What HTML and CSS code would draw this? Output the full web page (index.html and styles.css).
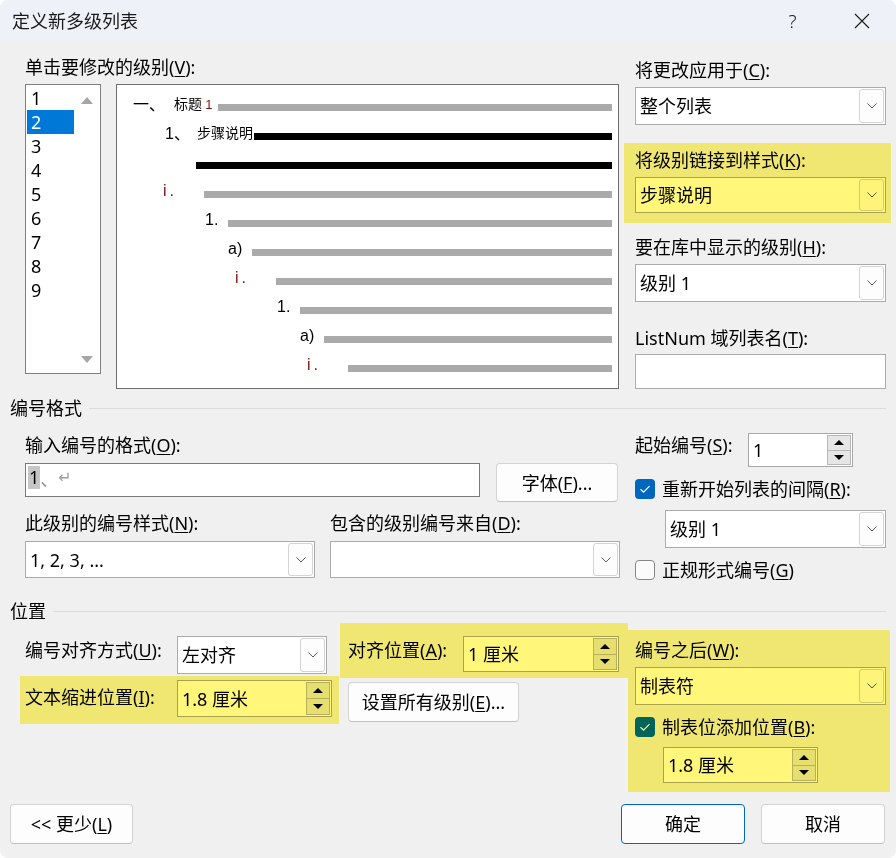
FILE: index.html
```html
<!DOCTYPE html>
<html lang="zh-CN">
<head>
<meta charset="utf-8">
<title>定义新多级列表</title>
<link rel="stylesheet" href="styles.css">
</head>
<body>
<div class="dlg">
  <div class="titlebar">
    <div class="title">定义新多级列表</div>
    <div class="tb-btn help">?</div>
    <div class="tb-btn close"><svg width="16" height="16" viewBox="0 0 16 16"><path d="M1 1 L15 15 M15 1 L1 15" stroke="#1a1a1a" stroke-width="1.1" fill="none"/></svg></div>
  </div>

  <div class="top">
    <div class="top-left">
      <div class="lbl">单击要修改的级别(<u>V</u>):</div>
      <div class="lvl-row">
        <div class="levels">
          <div class="items">
            <div class="item">1</div>
            <div class="item sel">2</div>
            <div class="item">3</div>
            <div class="item">4</div>
            <div class="item">5</div>
            <div class="item">6</div>
            <div class="item">7</div>
            <div class="item">8</div>
            <div class="item">9</div>
          </div>
          <div class="vscroll">
            <svg width="12" height="7" viewBox="0 0 12 7"><path d="M0 7 L6 0 L12 7 Z" fill="#a6a6a6"/></svg>
            <svg width="12" height="7" viewBox="0 0 12 7"><path d="M0 0 L6 7 L12 0 Z" fill="#a6a6a6"/></svg>
          </div>
        </div>
        <div class="preview">
          <div class="pv-row r1"><span class="pn cjk w41">一、</span><span class="pt w44">标题 <span class="red">1</span></span><span class="pv-bar"></span></div>
          <div class="pv-row r2"><span class="pn w32">1<span class="cjkc">、</span></span><span class="pt w57">步骤说明</span><span class="pv-bar blk"></span></div>
          <div class="pv-row r3"><span class="pv-bar blk"></span></div>
          <div class="pv-row r4"><span class="pn red ii w41">i.</span><span class="pv-bar"></span></div>
          <div class="pv-row r5"><span class="pn w23">1.</span><span class="pv-bar"></span></div>
          <div class="pv-row r6"><span class="pn w24">a)</span><span class="pv-bar"></span></div>
          <div class="pv-row r7"><span class="pn red ii w41">i.</span><span class="pv-bar"></span></div>
          <div class="pv-row r8"><span class="pn w23">1.</span><span class="pv-bar"></span></div>
          <div class="pv-row r9"><span class="pn w24">a)</span><span class="pv-bar"></span></div>
          <div class="pv-row r10"><span class="pn red ii w41">i.</span><span class="pv-bar"></span></div>
        </div>
      </div>
    </div>

    <div class="top-right">
      <div class="lbl">将更改应用于(<u>C</u>):</div>
      <div class="combo h38 mt5"><span class="cv">整个列表</span><span class="dd"><svg width="10" height="6" viewBox="0 0 10 6"><path d="M0.5 0.5 L5 5 L9.5 0.5" stroke="#5c5c5c" fill="none"/></svg></span></div>
      <div class="hl hl-link">
        <div class="lbl">将级别链接到样式(<u>K</u>):</div>
        <div class="combo h36 mt5"><span class="cv">步骤说明</span><span class="dd"><svg width="10" height="6" viewBox="0 0 10 6"><path d="M0.5 0.5 L5 5 L9.5 0.5" stroke="#5c5c5c" fill="none"/></svg></span></div>
      </div>
      <div class="lbl mt12">要在库中显示的级别(<u>H</u>):</div>
      <div class="combo h38 mt5"><span class="cv">级别 1</span><span class="dd"><svg width="10" height="6" viewBox="0 0 10 6"><path d="M0.5 0.5 L5 5 L9.5 0.5" stroke="#5c5c5c" fill="none"/></svg></span></div>
      <div class="lbl mt24">ListNum 域列表名(<u>T</u>):</div>
      <div class="field h35 mt4"></div>
    </div>
  </div>

  <div class="sec s-fmt">编号格式</div>

  <div class="fmt">
    <div class="fmt-left">
      <div class="lbl">输入编号的格式(<u>O</u>):</div>
      <div class="fmt-r1">
        <div class="edit"><span class="selnum">1</span><span class="g1">、</span><span class="g2">↵</span></div>
        <div class="btn b-font">字体(<u>F</u>)...</div>
      </div>
      <div class="grid2 mt9">
        <div class="lbl">此级别的编号样式(<u>N</u>):</div>
        <div class="lbl">包含的级别编号来自(<u>D</u>):</div>
      </div>
      <div class="grid2 mt6">
        <div class="combo h37"><span class="cv">1, 2, 3, ...</span><span class="dd"><svg width="10" height="6" viewBox="0 0 10 6"><path d="M0.5 0.5 L5 5 L9.5 0.5" stroke="#5c5c5c" fill="none"/></svg></span></div>
        <div class="combo h37"><span class="cv"></span><span class="dd"><svg width="10" height="6" viewBox="0 0 10 6"><path d="M0.5 0.5 L5 5 L9.5 0.5" stroke="#5c5c5c" fill="none"/></svg></span></div>
      </div>
    </div>
    <div class="fmt-right">
      <div class="row-start">
        <div class="lbl w113">起始编号(<u>S</u>):</div>
        <div class="spin w105 h34"><span class="sv">1</span><div class="sbtns"><div class="sbtn"><svg width="10" height="5" viewBox="0 0 10 5"><path d="M0 5 L5 0 L10 5 Z" fill="#000"/></svg></div><div class="sbtn"><svg width="10" height="5" viewBox="0 0 10 5"><path d="M0 0 L5 5 L10 0 Z" fill="#000"/></svg></div></div></div>
      </div>
      <div class="cbrow mt12"><span class="cb on"><svg width="20" height="20" viewBox="0 0 20 20"><path d="M5.5 10.2 L8.6 13.2 L14.5 7.2" stroke="#fff" stroke-width="1.2" fill="none"/></svg></span><span class="cbl">重新开始列表的间隔(<u>R</u>):</span></div>
      <div class="combo h38 mt11 c-restart"><span class="cv">级别 1</span><span class="dd"><svg width="10" height="6" viewBox="0 0 10 6"><path d="M0.5 0.5 L5 5 L9.5 0.5" stroke="#5c5c5c" fill="none"/></svg></span></div>
      <div class="cbrow mt12"><span class="cb off"></span><span class="cbl">正规形式编号(<u>G</u>)</span></div>
    </div>
  </div>

  <div class="sec s-pos">位置</div>

  <div class="pos">
    <div class="pos-a">
      <div class="pa-r1">
        <div class="lbl w152 mt2">编号对齐方式(<u>U</u>):</div>
        <div class="combo h38 w150"><span class="cv">左对齐</span><span class="dd"><svg width="10" height="6" viewBox="0 0 10 6"><path d="M0.5 0.5 L5 5 L9.5 0.5" stroke="#5c5c5c" fill="none"/></svg></span></div>
      </div>
      <div class="hl hl-indent">
        <div class="lbl w152 mt5">文本缩进位置(<u>I</u>):</div>
        <div class="spin w155 h37"><span class="sv">1.8 厘米</span><div class="sbtns"><div class="sbtn"><svg width="10" height="5" viewBox="0 0 10 5"><path d="M0 5 L5 0 L10 5 Z" fill="#000"/></svg></div><div class="sbtn"><svg width="10" height="5" viewBox="0 0 10 5"><path d="M0 0 L5 5 L10 0 Z" fill="#000"/></svg></div></div></div>
      </div>
    </div>
    <div class="pos-b">
      <div class="hl hl-align">
        <div class="lbl w115 mt2">对齐位置(<u>A</u>):</div>
        <div class="spin w156 h36"><span class="sv">1 厘米</span><div class="sbtns"><div class="sbtn"><svg width="10" height="5" viewBox="0 0 10 5"><path d="M0 5 L5 0 L10 5 Z" fill="#000"/></svg></div><div class="sbtn"><svg width="10" height="5" viewBox="0 0 10 5"><path d="M0 0 L5 5 L10 0 Z" fill="#000"/></svg></div></div></div>
      </div>
      <div class="btn b-all">设置所有级别(<u>E</u>)...</div>
    </div>
    <div class="pos-c">
      <div class="hl hl-after">
        <div class="lbl">编号之后(<u>W</u>):</div>
        <div class="combo h38 mt5"><span class="cv">制表符</span><span class="dd"><svg width="10" height="6" viewBox="0 0 10 6"><path d="M0.5 0.5 L5 5 L9.5 0.5" stroke="#5c5c5c" fill="none"/></svg></span></div>
        <div class="cbrow mt12"><span class="cb on"><svg width="20" height="20" viewBox="0 0 20 20"><path d="M5.5 10.2 L8.6 13.2 L14.5 7.2" stroke="#fff" stroke-width="1.2" fill="none"/></svg></span><span class="cbl">制表位添加位置(<u>B</u>):</span></div>
        <div class="spin w155 h36 mt10 ml28"><span class="sv">1.8 厘米</span><div class="sbtns"><div class="sbtn"><svg width="10" height="5" viewBox="0 0 10 5"><path d="M0 5 L5 0 L10 5 Z" fill="#000"/></svg></div><div class="sbtn"><svg width="10" height="5" viewBox="0 0 10 5"><path d="M0 0 L5 5 L10 0 Z" fill="#000"/></svg></div></div></div>
      </div>
    </div>
  </div>

  <div class="footer">
    <div class="btn b-less">&lt;&lt; 更少(<u>L</u>)</div>
    <div class="btn b-ok">确定</div>
    <div class="btn b-cancel">取消</div>
  </div>
</div>
</body>
</html>
```

FILE: styles.css
```css
* { box-sizing: border-box; margin: 0; padding: 0; }
html, body { background: #ffffff; }
body {
  font-family: "Noto Sans", "Noto Sans CJK SC", sans-serif;
  font-size: 18px;
  line-height: 24px;
  color: #000;
}
u { text-decoration: underline; text-decoration-thickness: 1px; text-underline-offset: 2px; }

.dlg {
  width: 896px; height: 858px;
  background: #f0f0f0;
  border-radius: 8px;
  overflow: hidden;
  display: flex; flex-direction: column;
}

/* title bar */
.titlebar { height: 41px; flex: none; background: #eef2f8; display: flex; align-items: center; }
.title { flex: 1; padding-left: 12px; color: #1a1a1a; }
.tb-btn { width: 69px; height: 41px; display: flex; align-items: center; justify-content: center; }
.help { font-size: 19px; font-weight: 300; color: #1a1a1a; }

/* helpers */
.lbl { line-height: 24px; white-space: nowrap; flex: none; }
.mt2 { margin-top: 2px; }
.mt4 { margin-top: 4px; }
.mt5 { margin-top: 5px; }
.mt6 { margin-top: 6px; }
.mt9 { margin-top: 9px; }
.mt10 { margin-top: 10px; }
.mt11 { margin-top: 11px; }
.mt12 { margin-top: 12px; }
.mt24 { margin-top: 24px; }
.ml28 { margin-left: 28px; }
.h34 { height: 34px; }
.h35 { height: 35px; }
.h36 { height: 36px; }
.h37 { height: 37px; }
.h38 { height: 38px; }
.w105 { width: 105px; }
.w113 { width: 113px; }
.w115 { width: 115px; }
.w150 { width: 150px; }
.w152 { width: 152px; }
.w155 { width: 155px; }
.w156 { width: 156px; }

/* top area */
.top { display: flex; flex: none; }
.top-left { margin-left: 25px; padding-top: 14px; width: 594px; }
.lvl-row { display: flex; gap: 15px; margin-top: 5px; }
.levels { width: 76px; height: 290px; border: 1px solid #7f7f7f; background: #fff; display: flex; }
.items { width: 48px; padding: 1px 0 0 1px; }
.item { height: 24px; line-height: 24px; padding-left: 4px; }
.item.sel { background: #0078d7; color: #fff; }
.vscroll {
  flex: 1; display: flex; flex-direction: column; justify-content: space-between; align-items: center;
  padding: 12px 0 10px;
}

.preview { width: 503px; height: 305px; border: 1px solid #6e6e6e; background: #fff; padding: 8px 6px 0 0; }
.pv-row { height: 29px; display: flex; align-items: flex-start; }
.pv-bar { flex: 1; height: 7px; margin-top: 11px; background: #aaaaaa; }
.pv-bar.blk { background: #000; }
.pn { flex: none; font-family: "Liberation Sans", Arial, sans-serif; font-size: 16px; line-height: 21px; white-space: nowrap; }
.pn.cjk { font-family: "Noto Sans CJK SC", sans-serif; font-size: 16px; }
.cjkc { font-family: "Noto Sans CJK SC", sans-serif; }
.pt { flex: none; font-family: "Noto Sans CJK SC", sans-serif; font-size: 14px; line-height: 21px; white-space: nowrap; }
.pt .red { font-family: "Liberation Sans", sans-serif; font-size: 13px; }
.red { color: #7a1010; }
.ii { letter-spacing: 3px; }
.w23 { width: 23px; }
.w24 { width: 24px; }
.w32 { width: 32px; }
.w41 { width: 41px; }
.w44 { width: 44px; }
.w57 { width: 57px; }
.r1 { padding-left: 16px; }
.r2 { padding-left: 48px; }
.r3 { padding-left: 79px; }
.r4 { padding-left: 46px; }
.r5 { padding-left: 88px; }
.r6 { padding-left: 111px; }
.r7 { padding-left: 118px; }
.r8 { padding-left: 160px; }
.r9 { padding-left: 183px; }
.r10 { padding-left: 190px; }

.top-right { margin-left: 16px; width: 251px; padding-top: 17px; }

/* controls */
.combo {
  display: flex; align-items: center;
  background: #fff; border: 1px solid #ababab;
  padding-left: 4px;
}
.cv { white-space: nowrap; }
.dd {
  margin: 1px 1px 1px auto; width: 25px; align-self: stretch; flex: none;
  border: 1px solid #d4d4d4; border-radius: 3px; background: #fdfdfd;
  display: flex; align-items: center; justify-content: center;
}
.field { background: #fff; border: 1px solid #ababab; }

.spin { display: flex; align-items: center; background: #fff; border: 1px solid #a8a8a8; padding-left: 4px; flex: none; }
.sv { white-space: nowrap; }
.sbtns { margin: 1px 1px 1px auto; width: 24px; align-self: stretch; display: flex; flex-direction: column; }
.sbtn { flex: 1; background: #e6e6e6; border: 1px solid #b8b8b8; display: flex; align-items: center; justify-content: center; }
.sbtn + .sbtn { border-top: none; }

.cbrow { display: flex; align-items: center; height: 20px; }
.cb { width: 20px; height: 20px; border-radius: 4px; flex: none; display: block; }
.cb svg { display: block; }
.cb.on { background: #0067c0; }
.cb.off { border: 1px solid #878787; background: #fbfbfb; }
.cbl { margin-left: 7px; line-height: 20px; white-space: nowrap; }

.btn {
  display: flex; align-items: center; justify-content: center;
  background: #fdfdfd; border: 1px solid #d3d3d3; border-bottom-color: #c0c0c0;
  border-radius: 4px; white-space: nowrap; flex: none;
}

/* yellow highlight (multiplied over the content) */
.hl { position: relative; }
.hl::after {
  content: ""; position: absolute; inset: 0;
  background: #fff67a; mix-blend-mode: multiply; pointer-events: none;
}
.hl-link { margin: 18px -5px 0 -11px; padding: 5px 5px 10px 11px; }

/* section headings */
.sec { display: flex; align-items: center; height: 24px; padding: 0 10px; flex: none; }
.sec::after { content: ""; flex: 1; height: 1px; background: #dcdcdc; margin-left: 7px; }
.s-fmt { margin-top: 7px; }
.s-pos { margin-top: 19px; }

/* numbering format */
.fmt { display: flex; flex: none; }
.fmt-left { margin-left: 25px; width: 595px; padding-top: 13px; }
.fmt-r1 { display: flex; align-items: flex-start; gap: 16px; margin-top: 6px; }
.edit { width: 455px; height: 34px; background: #fff; border: 1px solid #7a7a7a; padding-left: 2px; display: flex; align-items: flex-start; }
.selnum { background: #c6c6c6; line-height: 23px; margin-top: 2px; padding: 0 1px; }
.g1 { color: #8a8a8a; margin-top: 2px; font-family: "Noto Sans CJK SC", sans-serif; }
.g2 { color: #a0a0a0; font-size: 16px; margin-top: 2px; font-family: "DejaVu Sans", sans-serif; }
.b-font { width: 122px; height: 39px; }
.grid2 { display: grid; grid-template-columns: 290px 290px; column-gap: 15px; }

.fmt-right { margin-left: 15px; width: 251px; padding-top: 13px; }
.row-start { display: flex; align-items: flex-start; }
.c-restart { margin-left: 30px; }

/* position */
.pos { display: flex; align-items: flex-start; flex: none; }
.pos-a { margin-left: 20px; width: 319px; }
.pa-r1 { display: flex; align-items: flex-start; margin-top: 13px; padding-left: 5px; }
.hl-indent { display: flex; align-items: flex-start; margin-top: 2px; height: 48px; padding: 4px 0 0 5px; }
.pos-b { margin-left: 1px; width: 288px; }
.hl-align { display: flex; align-items: flex-start; height: 55px; padding: 13px 0 0 8px; }
.b-all { width: 171px; height: 40px; margin: 4px 0 0 8px; }
.pos-c { width: 262px; }
.hl-after { margin-top: 7px; height: 162px; padding: 8px 0 0 7px; }
.hl-after .combo { width: 251px; }

/* footer */
.footer { margin-top: auto; display: flex; padding: 0 11px 14px 10px; flex: none; }
.footer .btn { height: 40px; }
.b-less { width: 123px; margin-right: auto; }
.b-ok { width: 124px; border-color: #0067c0; }
.b-cancel { width: 124px; margin-left: 16px; }
```
